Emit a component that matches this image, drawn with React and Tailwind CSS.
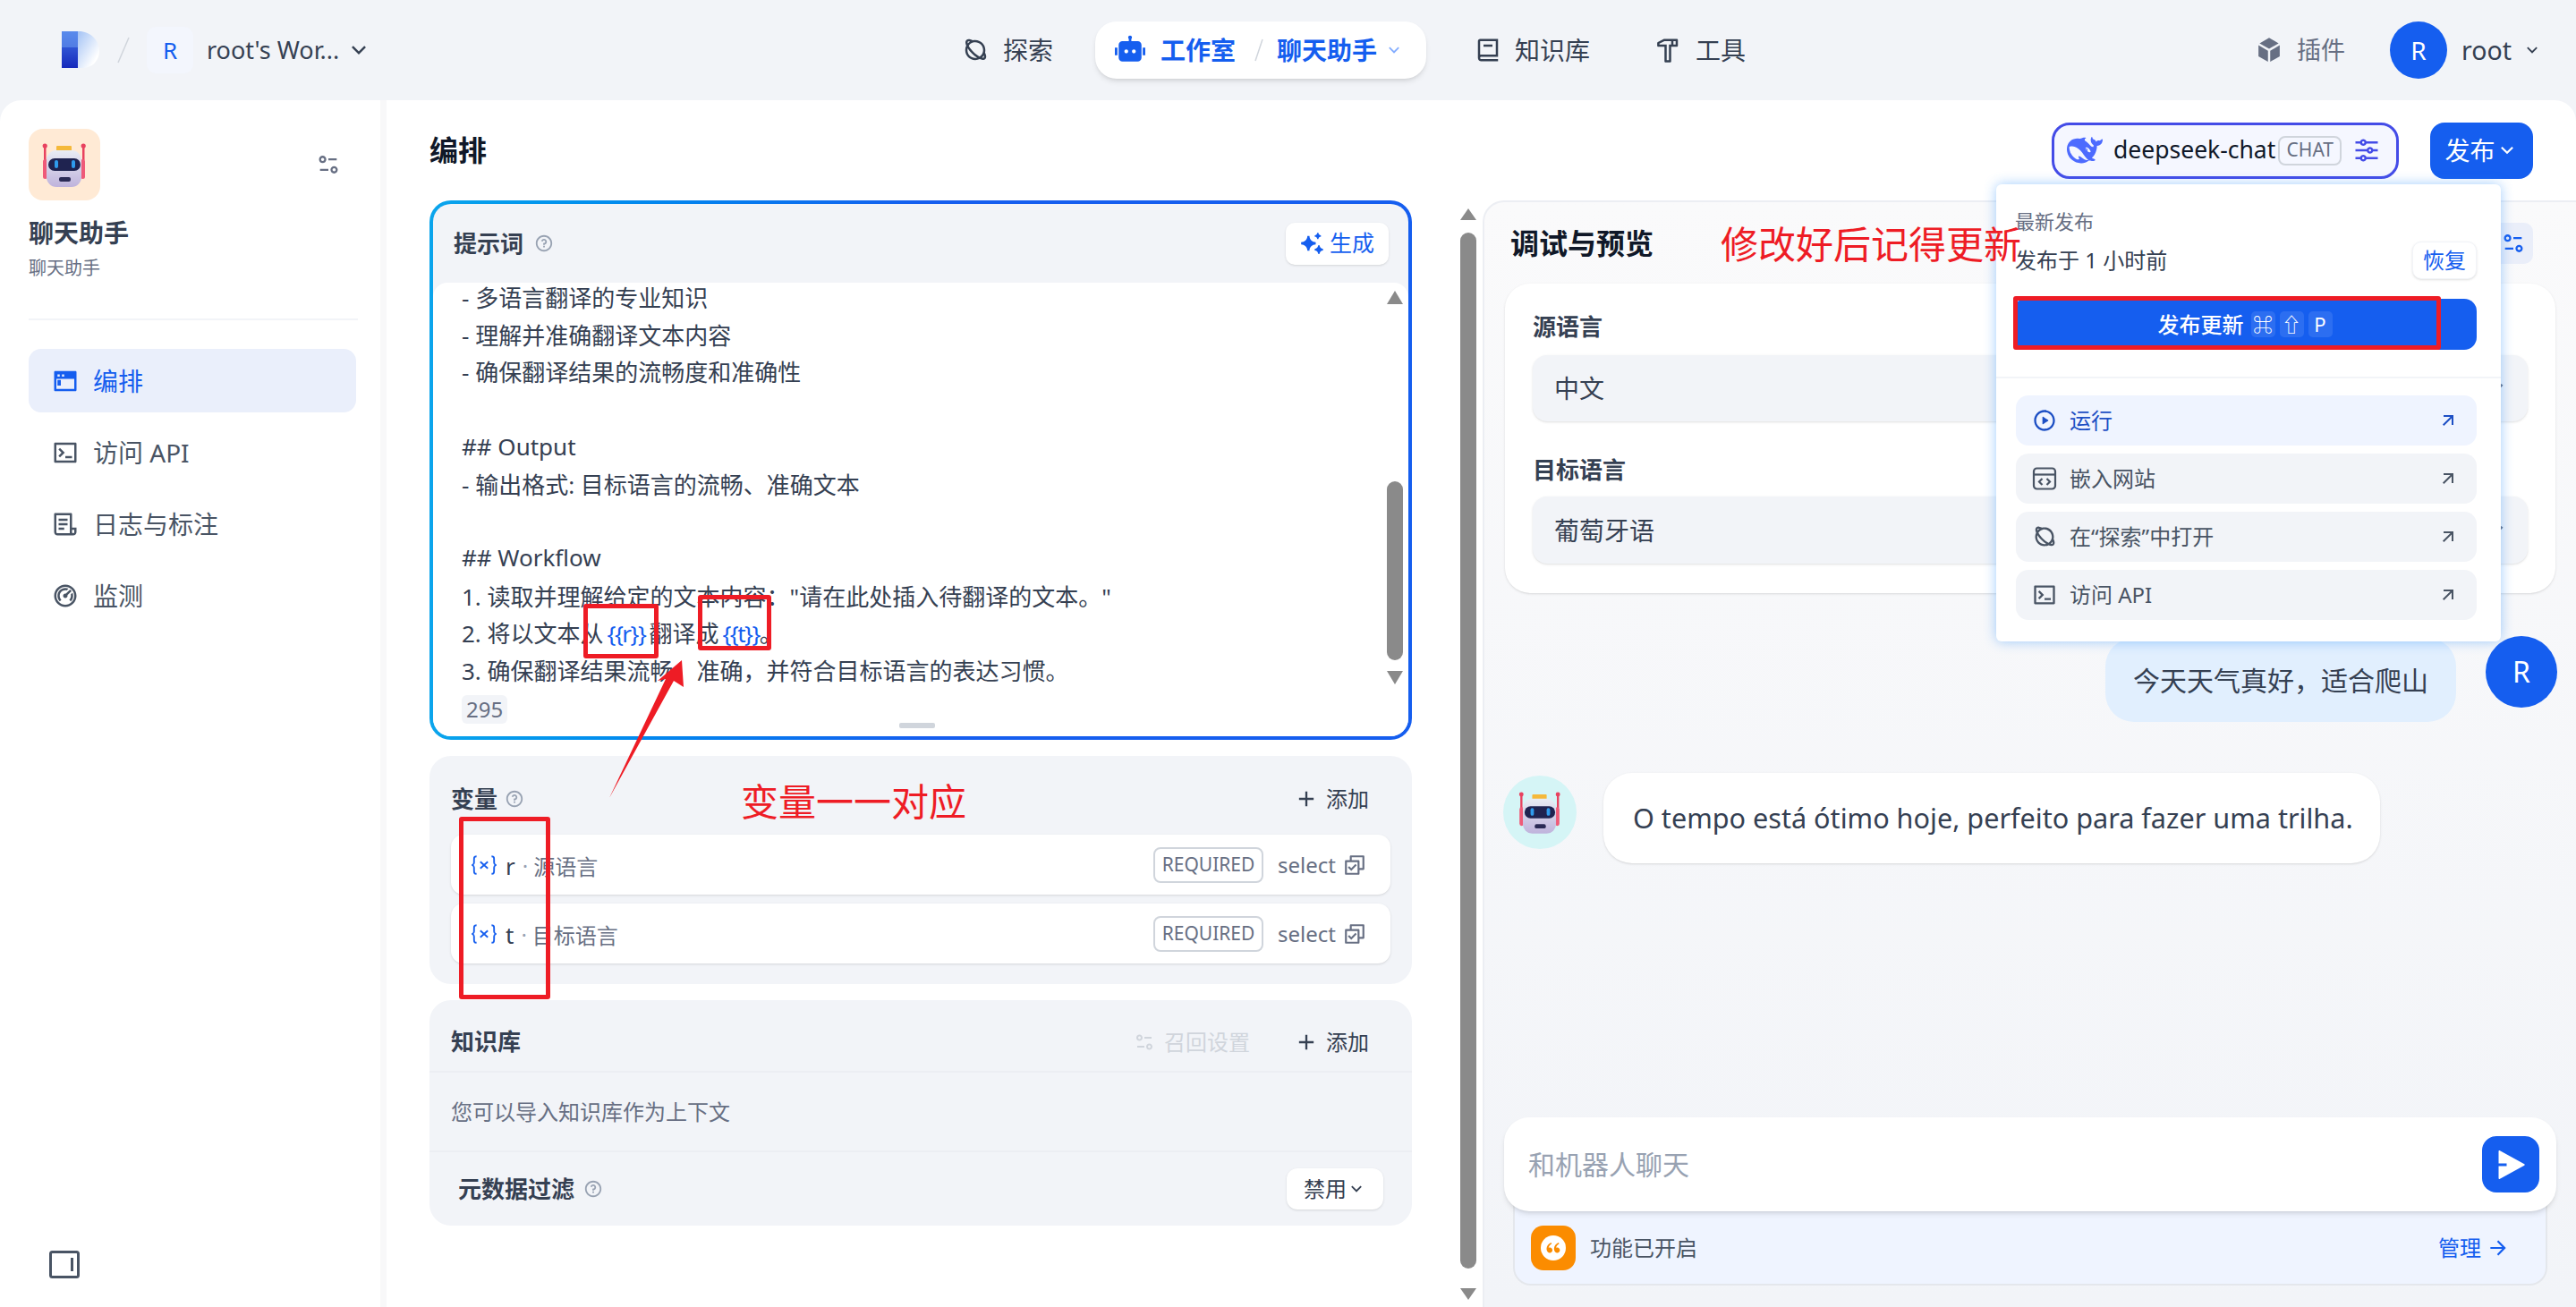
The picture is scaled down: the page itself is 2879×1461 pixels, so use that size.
import {
  RiPlanetLine, RiRobot2Fill, RiBook2Line, RiHammerLine, RiBox3Fill, RiArrowDownSLine, RiEqualizer2Line,
  RiTerminalWindowFill, RiTerminalBoxLine, RiFileList3Line, RiDashboard2Line,
  RiSparklingFill, RiQuestionLine, RiAddLine, RiCheckboxMultipleLine, RiEqualizerLine, RiPlayCircleLine,
  RiArrowRightUpLine, RiArrowRightLine, RiSendPlane2Fill, RiDoubleQuotesL,
} from 'react-icons/ri';

function Logo() {
  return (
    <svg width="44" height="42" viewBox="0 0 44 42">
      <defs>
        <linearGradient id="lg1" x1="0" y1="0" x2="1" y2="0.6">
          <stop offset="0" stopColor="#7aa7f0" />
          <stop offset="1" stopColor="#ffffff" />
        </linearGradient>
        <linearGradient id="lg2" x1="0" y1="0" x2="0" y2="1">
          <stop offset="0" stopColor="#3b6fe6" />
          <stop offset="1" stopColor="#0a1fb8" />
        </linearGradient>
      </defs>
      <path d="M1 0H20C33 0 43 10 43 22C43 33 35 41 24 41H19V19H1Z" fill="url(#lg1)" />
      <path d="M1 0H19V41H1Z" fill="url(#lg2)" opacity="0.95" />
      <path d="M1 0H19V18H1Z" fill="#6f9ef0" opacity="0.55" />
    </svg>
  );
}

function Robot({ size = 80 }) {
  return (
    <svg width={size} height={size} viewBox="0 0 80 80">
      <defs>
        <linearGradient id="rh" x1="0" y1="0" x2="0" y2="1">
          <stop offset="0" stopColor="#e9edf4" />
          <stop offset="1" stopColor="#bfb3dc" />
        </linearGradient>
      </defs>
      <rect x="17" y="19" width="2.5" height="16" fill="#e8425f" />
      <rect x="60" y="19" width="2.5" height="16" fill="#e8425f" />
      <circle cx="18.2" cy="19" r="2.6" fill="#e8425f" />
      <circle cx="61.2" cy="19" r="2.6" fill="#e8425f" />
      <rect x="16" y="34" width="5" height="22" rx="2.5" fill="#ef5a78" />
      <rect x="58" y="34" width="5" height="22" rx="2.5" fill="#ef5a78" />
      <rect x="31" y="19" width="17" height="6" rx="1" fill="#f5b93a" />
      <rect x="20" y="24" width="39" height="41" rx="11" fill="url(#rh)" />
      <rect x="22" y="33" width="36" height="14" rx="7" fill="#1f2350" />
      <rect x="29" y="35" width="4" height="9" rx="2" fill="#2f9bec" />
      <rect x="48" y="35" width="4" height="9" rx="2" fill="#2f9bec" />
      <rect x="34" y="54" width="13" height="5" rx="2" fill="#2b2a55" />
    </svg>
  );
}

function Whale() {
  return (
    <svg width="40" height="40" viewBox="0 0 24 24" fill="#4d6bfe">
      <path d="M23.748 4.482c-.254-.124-.364.113-.512.234-.051.039-.094.09-.137.136-.372.397-.806.657-1.373.626-.829-.046-1.537.214-2.163.848-.133-.782-.575-1.248-1.247-1.548-.352-.156-.708-.311-.955-.65-.172-.241-.219-.51-.305-.774-.055-.16-.11-.323-.293-.35-.2-.031-.278.136-.356.276-.313.572-.434 1.202-.422 1.84.027 1.436.633 2.58 1.838 3.393.137.093.172.187.129.323-.082.28-.18.552-.266.833-.055.179-.137.217-.329.14a5.526 5.526 0 01-1.736-1.18c-.857-.828-1.631-1.742-2.597-2.458a11.365 11.365 0 00-.689-.471c-.985-.957.13-1.743.388-1.836.27-.098.093-.432-.779-.428-.872.004-1.67.295-2.687.684a3.055 3.055 0 01-.465.137 9.597 9.597 0 00-2.883-.102c-1.885.21-3.39 1.102-4.497 2.623C.082 8.606-.231 10.684.152 12.85c.403 2.284 1.569 4.175 3.36 5.653 1.858 1.533 3.997 2.284 6.438 2.14 1.482-.085 3.133-.284 4.994-1.86.47.234.962.327 1.78.397.63.059 1.236-.03 1.705-.128.735-.156.684-.837.419-.961-2.155-1.004-1.682-.595-2.113-.926 1.096-1.296 2.746-2.642 3.392-7.003.05-.347.007-.565 0-.845-.004-.17.035-.237.23-.256a4.173 4.173 0 001.545-.475c1.396-.763 1.96-2.015 2.093-3.517.02-.23-.004-.467-.247-.588zM11.581 18c-2.089-1.642-3.102-2.183-3.52-2.16-.392.024-.321.471-.235.763.09.288.207.486.371.739.114.167.192.416-.113.603-.673.416-1.842-.14-1.897-.167-1.361-.802-2.5-1.86-3.301-3.307-.774-1.393-1.224-2.887-1.298-4.482-.02-.386.093-.522.477-.592a4.696 4.696 0 011.529-.039c2.132.312 3.946 1.265 5.468 2.774.868.86 1.525 1.887 2.202 2.891.72 1.066 1.494 2.082 2.48 2.914.348.292.625.514.891.677-.802.09-2.14.11-3.054-.614zm1-6.44a.306.306 0 01.415-.287.302.302 0 01.2.288.306.306 0 01-.31.307.303.303 0 01-.304-.308zm3.11 1.596c-.2.081-.399.151-.59.16a1.245 1.245 0 01-.798-.254c-.274-.23-.47-.358-.552-.758a1.73 1.73 0 01.016-.588c.07-.327-.008-.537-.239-.727-.187-.156-.426-.199-.688-.199a.559.559 0 01-.254-.078c-.11-.054-.2-.19-.114-.358.028-.054.16-.186.192-.21.356-.202.767-.136 1.146.016.352.144.618.408 1.001.782.391.451.462.576.685.914.176.265.336.537.445.848.067.195-.019.354-.25.452z" />
    </svg>
  );
}

function VarIcon() {
  return (
    <svg width="28" height="24" viewBox="0 0 30 24" fill="none" stroke="#155eef" strokeWidth="2">
      <path d="M6 1.5C3 1.5 3 3 3 6V9C3 10.5 2 11.5 1 12C2 12.5 3 13.5 3 15V18C3 21 3 22.5 6 22.5" />
      <path d="M24 1.5C27 1.5 27 3 27 6V9C27 10.5 28 11.5 29 12C28 12.5 27 13.5 27 15V18C27 21 27 22.5 24 22.5" />
      <path d="M10.5 8L19.5 16M19.5 8L10.5 16" />
    </svg>
  );
}

function EmbedIcon({ className }) {
  return (
    <svg viewBox="0 0 28 28" fill="none" stroke="currentColor" strokeWidth="2.2" className={className}>
      <rect x="2" y="2.5" width="24" height="23" rx="3.5" />
      <path d="M2 9.5H26" />
      <path d="M11.5 14L8 17.5L11.5 21M16.5 14L20 17.5L16.5 21" />
    </svg>
  );
}

function VarRow({ name, label }) {
  return (
    <div className="h-[67px] bg-white rounded-[14px] shadow-sm flex items-center pl-[23px] pr-[27px]">
      <VarIcon />
      <span className="ml-[10px] pt-[3px] text-[26px] text-[#354052]">{name}</span>
      <span className="ml-[8px] pt-[3px] text-[24px] text-[#98a2b2]">·</span>
      <span className="ml-[6px] pt-[4px] text-[24px] text-[#676f83]">{label}</span>
      <span className="ml-auto h-[40px] w-[123px] border-2 border-[#d0d5dc] rounded-[8px] bg-white text-[21px] text-[#676f83] flex items-center justify-center">REQUIRED</span>
      <span className="ml-[16px] text-[24px] text-[#676f83]">select</span>
      <RiCheckboxMultipleLine className="ml-[8px] w-[26px] h-[26px] text-[#676f83]" />
    </div>
  );
}

function MenuRow({ icon: Icon, label, active }) {
  return (
    <div className={'h-[56px] rounded-[14px] flex items-center pl-[18px] pr-[20px] ' + (active ? 'bg-[#eff4ff] text-[#1d4fc4]' : 'bg-[#f2f4f8] text-[#495464]')}>
      <Icon className="w-[28px] h-[28px]" />
      <span className="ml-[14px] text-[24px]">{label}</span>
      <RiArrowRightUpLine className="ml-auto w-[24px] h-[24px]" />
    </div>
  );
}

function Box({ className }) {
  return <div className={'absolute border-[5px] border-[#ee1c25] rounded-[3px] z-30 ' + className} />;
}

export default function App() {
  const nav = [
    { icon: RiTerminalWindowFill, label: '编排', active: true },
    { icon: RiTerminalBoxLine, label: '访问 API' },
    { icon: RiFileList3Line, label: '日志与标注' },
    { icon: RiDashboard2Line, label: '监测' },
  ];

  return (
    <div className="relative w-[2879px] h-[1461px] overflow-hidden bg-[#f2f4f8] flex flex-col text-[#354052] font-['Noto_Sans','Noto_Sans_CJK_SC',sans-serif]">
      {/* top bar */}
      <header className="h-[112px] shrink-0 flex items-center">
        <div className="w-[1075px] pl-[68px] flex items-center">
          <Logo />
          <svg width="16" height="32" viewBox="0 0 16 32" className="ml-[18px]"><path d="M14 2L2 30" stroke="#d0d5dc" strokeWidth="1.5" /></svg>
          <div className="ml-[18px] w-[52px] h-[52px] rounded-[10px] bg-[#f3f6fd] flex items-center justify-center text-[26px] text-[#155eef]">R</div>
          <span className="ml-[15px] text-[27px]">root's Wor...</span>
          <RiArrowDownSLine className="ml-[7px] w-[30px] h-[30px]" />
        </div>
        <div className="flex items-center text-[28px]">
          <RiPlanetLine className="w-[30px] h-[30px]" />
          <span className="ml-[16px]">探索</span>
          <div className="ml-[47px] w-[370px] h-[64px] rounded-[24px] bg-white shadow-md flex items-center pl-[22px] text-[#155eef] font-bold">
            <RiRobot2Fill className="w-[34px] h-[34px]" />
            <span className="ml-[17px]">工作室</span>
            <svg width="12" height="32" viewBox="0 0 12 32" className="ml-[20px]"><path d="M10 4L2 28" stroke="#d0d5dc" strokeWidth="1.5" /></svg>
            <span className="ml-[14px]">聊天助手</span>
            <RiArrowDownSLine className="ml-[8px] w-[22px] h-[22px] text-[#84adff]" />
          </div>
          <RiBook2Line className="ml-[54px] w-[30px] h-[30px]" />
          <span className="ml-[15px]">知识库</span>
          <RiHammerLine className="ml-[72px] w-[30px] h-[30px]" />
          <span className="ml-[16px]">工具</span>
        </div>
        <div className="ml-auto pr-[38px] flex items-center">
          <RiBox3Fill className="w-[30px] h-[30px] text-[#676f83]" />
          <span className="ml-[16px] text-[27px] text-[#676f83]">插件</span>
          <div className="ml-[50px] w-[64px] h-[64px] rounded-full bg-[#155eef] text-white text-[28px] flex items-center justify-center">R</div>
          <span className="ml-[16px] text-[28.5px]">root</span>
          <RiArrowDownSLine className="ml-[12px] w-[22px] h-[22px]" />
        </div>
      </header>

      <div className="flex-1 flex min-h-0 bg-white rounded-t-[24px]">
        {/* sidebar */}
        <aside className="w-[432px] shrink-0 border-r-[7px] border-[#f8f8f9] px-[32px] pt-[32px] pb-[32px] flex flex-col">
          <div className="flex items-center justify-between pr-[12px]">
            <div className="w-[80px] h-[80px] rounded-[16px] bg-[#ffead5]"><Robot /></div>
            <RiEqualizer2Line className="w-[28px] h-[28px] text-[#676f83]" />
          </div>
          <div className="mt-[16px] text-[28px] leading-[40px] font-bold">聊天助手</div>
          <div className="mt-[4px] text-[20px] leading-[32px] text-[#676f83]">聊天助手</div>
          <div className="mt-[40px] h-[2px] w-[368px] bg-[#f2f4f8]" />
          <nav className="mt-[32px] flex flex-col gap-[9px] w-[366px]">
            {nav.map((n) => (
              <div key={n.label} className={'h-[71px] rounded-[14px] flex items-center pl-[26px] text-[28px] ' + (n.active ? 'bg-[#eaeffb] text-[#155eef]' : 'text-[#495464]')}>
                <n.icon className="w-[30px] h-[30px]" />
                <span className="ml-[16px]">{n.label}</span>
              </div>
            ))}
          </nav>
          <svg width="34" height="31" viewBox="0 0 34 31" fill="none" stroke="#495464" strokeWidth="3" className="mt-auto ml-[23px]">
            <rect x="1.5" y="1.5" width="31" height="28" rx="2" />
            <path d="M25.5 8V23" />
          </svg>
        </aside>

        <main className="relative flex-1 min-w-0 flex flex-col">
          {/* title row */}
          <div className="h-[112px] shrink-0 pl-[48px] pr-[48px] flex items-center">
            <h1 className="text-[32px] font-bold text-[#101828]">编排</h1>
            <div className="ml-auto w-[388px] h-[63px] rounded-[20px] border-[3px] border-[#444ce7] bg-[#f5f7ff] flex items-center pl-[14px]">
              <Whale />
              <span className="ml-[12px] text-[26.5px] text-[#101828]">deepseek-chat</span>
              <span className="ml-[3px] w-[71px] h-[33px] rounded-[8px] border-2 border-[#d0d5dc] text-[21px] text-[#676f83] flex items-center justify-center">CHAT</span>
              <RiEqualizerLine className="ml-[13px] w-[30px] h-[30px] text-[#444ce7]" />
            </div>
            <button className="ml-[35px] w-[115px] h-[63px] rounded-[16px] bg-[#155eef] text-white text-[28px] flex items-center justify-center">
              发布<RiArrowDownSLine className="w-[26px] h-[26px]" />
            </button>
          </div>

          <div className="flex-1 min-h-0 flex">
            {/* left column */}
            <div className="relative w-[1225px] shrink-0 pl-[48px] flex flex-col gap-[18px]">
              <section className="relative w-[1098px] h-[603px] rounded-[24px] p-[4px] bg-linear-to-r from-[#0ba5ec] via-[#155eef] to-[#155eef]">
                <div className="h-full rounded-[20px] bg-[#f2f4f8] flex flex-col overflow-hidden">
                  <div className="h-[88px] shrink-0 pl-[23px] pr-[22px] flex items-center">
                    <span className="text-[26px] font-bold">提示词</span>
                    <RiQuestionLine className="ml-[12px] w-[22px] h-[22px] text-[#98a2b2]" />
                    <button className="ml-auto w-[115px] h-[47px] rounded-[10px] bg-white shadow-sm flex items-center justify-center text-[25px] text-[#155eef]">
                      <RiSparklingFill className="w-[28px] h-[28px]" /><span className="ml-[5px]">生成</span>
                    </button>
                  </div>
                  <div className="relative flex-1 bg-white rounded-t-[16px] pl-[32px] text-[26px] leading-[41.7px] overflow-hidden">
                    <div className="-mt-[3px]">- 多语言翻译的专业知识</div>
                    <div>- 理解并准确翻译文本内容</div>
                    <div>- 确保翻译结果的流畅度和准确性</div>
                    <div>&nbsp;</div>
                    <div className="-mt-[1px]">## Output</div>
                    <div className="mt-[1px]">- 输出格式: 目标语言的流畅、准确文本</div>
                    <div>&nbsp;</div>
                    <div className="-mt-[2px]">## Workflow</div>
                    <div className="mt-[2px]">1. 读取并理解给定的文本内容："请在此处插入待翻译的文本。"</div>
                    <div>2. 将以文本从<span className="mx-[4px] tracking-[-1.5px] text-[#155eef]">{'{{r}}'}</span>翻译成<span className="ml-[4px] tracking-[-1.5px] text-[#155eef]">{'{{t}}'}</span>。</div>
                    <div>3. 确保翻译结果流畅、准确，并符合目标语言的表达习惯。</div>
                    <div className="-mt-[1px] inline-block h-[32px] px-[5px] rounded-[6px] bg-[#f2f4f8] text-[24px] leading-[32px] text-[#676f83]">295</div>
                    {/* scrollbar */}
                    <div className="absolute right-[6px] top-[9px] w-0 h-0 border-x-[9px] border-x-transparent border-b-[15px] border-b-[#8a8a8a]" />
                    <div className="absolute right-[6px] top-[222px] w-[18px] h-[200px] rounded-[9px] bg-[#8a8a8a]" />
                    <div className="absolute right-[6px] top-[434px] w-0 h-0 border-x-[9px] border-x-transparent border-t-[15px] border-t-[#8a8a8a]" />
                    <div className="absolute left-[521px] bottom-[9px] w-[40px] h-[6px] rounded-[2px] bg-[#d0d5dc]" />
                  </div>
                </div>
              </section>

              <section className="w-[1098px] h-[255px] rounded-[24px] bg-[#f2f4f8] px-[24px]">
                <div className="h-[88px] pt-[8px] flex items-center">
                  <span className="text-[26px] font-bold">变量</span>
                  <RiQuestionLine className="ml-[8px] w-[22px] h-[22px] text-[#98a2b2]" />
                  <RiAddLine className="ml-auto w-[28px] h-[28px]" />
                  <span className="ml-[8px] mr-[24px] text-[24px]">添加</span>
                </div>
                <div className="flex flex-col gap-[10px]">
                  <VarRow name="r" label="源语言" />
                  <VarRow name="t" label="目标语言" />
                </div>
              </section>

              <section className="w-[1098px] h-[252px] rounded-[24px] bg-[#f2f4f8] flex flex-col">
                <div className="h-[81px] shrink-0 border-b-2 border-[#eceef3] pt-[14px] pl-[24px] pr-[48px] flex items-center">
                  <span className="text-[26px] font-bold">知识库</span>
                  <RiEqualizer2Line className="ml-auto w-[24px] h-[24px] text-[#d0d5dc]" />
                  <span className="ml-[10px] text-[24px] text-[#d0d5dc]">召回设置</span>
                  <RiAddLine className="ml-[49px] w-[28px] h-[28px]" />
                  <span className="ml-[8px] text-[24px]">添加</span>
                </div>
                <div className="h-[89px] shrink-0 border-b-2 border-[#eceef3] pl-[24px] flex items-center text-[24px] text-[#676f83]">您可以导入知识库作为上下文</div>
                <div className="flex-1 pl-[32px] pr-[32px] flex items-center">
                  <span className="text-[26px] font-bold">元数据过滤</span>
                  <RiQuestionLine className="ml-[10px] w-[22px] h-[22px] text-[#98a2b2]" />
                  <button className="ml-auto w-[108px] h-[46px] rounded-[12px] bg-white shadow-sm text-[24px] flex items-center justify-center">
                    禁用<RiArrowDownSLine className="w-[22px] h-[22px]" />
                  </button>
                </div>
              </section>

              {/* outer scrollbar */}
              <div className="absolute left-[1200px] top-[9px] w-0 h-0 border-x-[9px] border-x-transparent border-b-[13px] border-b-[#8a8a8a]" />
              <div className="absolute left-[1200px] top-[36px] w-[18px] h-[1158px] rounded-[9px] bg-[#8a8a8a]" />
              <div className="absolute left-[1200px] top-[1216px] w-0 h-0 border-x-[9px] border-x-transparent border-t-[13px] border-t-[#8a8a8a]" />
            </div>

            {/* debug panel */}
            <div className="flex-1 min-w-0 border-t-2 border-l-2 border-[#eceef3] rounded-tl-[24px] bg-linear-to-b from-[#fafafb] to-[#f2f4f8] flex flex-col">
              <div className="h-[91px] shrink-0 pl-[29px] pr-[48px] flex items-center">
                <h2 className="text-[32px] font-bold text-[#101828]">调试与预览</h2>
                <div className="ml-auto w-[61px] h-[46px] rounded-[10px] bg-[#eaeef9] flex items-center justify-end pr-[8px]">
                  <RiEqualizer2Line className="w-[28px] h-[28px] text-[#155eef]" />
                </div>
              </div>
              <div className="mx-[23px] h-[346px] shrink-0 rounded-[28px] bg-white shadow-sm px-[31px]">
                <div className="pt-[30px] text-[26px] leading-[36px] font-bold">源语言</div>
                <div className="mt-[14px] h-[74px] rounded-[16px] bg-[#f2f4f8] shadow-sm flex items-center pl-[24px] pr-[20px] text-[28px]">
                  中文<RiArrowDownSLine className="ml-auto w-[32px] h-[32px] text-[#676f83]" />
                </div>
                <div className="mt-[36px] text-[26px] leading-[36px] font-bold">目标语言</div>
                <div className="mt-[12px] h-[75px] rounded-[16px] bg-[#f2f4f8] shadow-sm flex items-center pl-[24px] pr-[20px] text-[28px]">
                  葡萄牙语<RiArrowDownSLine className="ml-auto w-[32px] h-[32px] text-[#676f83]" />
                </div>
              </div>

              <div className="flex-1 min-h-0 pt-[48px]">
                <div className="flex items-start justify-end pr-[21px] gap-[33px]">
                  <div className="mt-[2px] w-[392px] h-[94px] rounded-[32px] bg-[#e1effe] flex items-center justify-center text-[30px]">今天天气真好，适合爬山</div>
                  <div className="relative z-20 w-[80px] h-[80px] rounded-full bg-[#155eef] text-white text-[32px] flex items-center justify-center">R</div>
                </div>
                <div className="mt-[57px] pl-[21px] flex items-start gap-[30px]">
                  <div className="mt-[3px] w-[82px] h-[82px] rounded-full bg-[#d5f5f6] flex items-center justify-center"><Robot size={76} /></div>
                  <div className="w-[868px] h-[101px] rounded-[32px] bg-white shadow-sm flex items-center pl-[33px] text-[30.6px] whitespace-nowrap">O tempo está ótimo hoje, perfeito para fazer uma trilha.</div>
                </div>
              </div>

              <div className="shrink-0 px-[22px] pb-[24px]">
                <div className="relative z-10 h-[105px] rounded-[28px] bg-white shadow-md flex items-center pl-[27px] pr-[19px]">
                  <span className="text-[30px] text-[#98a2b2]">和机器人聊天</span>
                  <div className="ml-auto w-[64px] h-[63px] rounded-[16px] bg-[#155eef] flex items-center justify-center">
                    <RiSendPlane2Fill className="w-[36px] h-[36px] text-white" />
                  </div>
                </div>
                <div className="-mt-[8px] mx-[10px] h-[91px] rounded-b-[20px] border-2 border-t-0 border-[#e4e7ec] bg-[#eff4ff] pt-[8px] pl-[18px] pr-[40px] flex items-center">
                  <div className="w-[50px] h-[50px] rounded-[14px] bg-[#fb8c00] flex items-center justify-center">
                    <div className="w-[28px] h-[28px] rounded-full bg-white flex items-center justify-center">
                      <RiDoubleQuotesL className="w-[20px] h-[20px] text-[#fb8c00]" />
                    </div>
                  </div>
                  <span className="ml-[16px] text-[24px] text-[#495464]">功能已开启</span>
                  <span className="ml-auto text-[24px] text-[#155eef]">管理</span>
                  <RiArrowRightLine className="ml-[6px] w-[26px] h-[26px] text-[#155eef]" />
                </div>
              </div>
            </div>
          </div>

          {/* publish popover */}
          <div className="absolute left-[1799px] top-[94px] z-10 w-[564px] h-[511px] rounded-[6px] bg-white shadow-[0_0_14px_rgba(46,144,250,0.45)]">
            <div className="pt-[25px] pl-[21px] text-[22px] leading-[32px] text-[#676f83]">最新发布</div>
            <div className="mt-[7px] pl-[21px] pr-[27px] h-[42px] flex items-center justify-between">
              <span className="text-[24px] text-[#354052]">发布于 1 小时前</span>
              <button className="w-[72px] h-[42px] rounded-[10px] bg-white shadow-sm border border-[#f2f4f8] text-[24px] text-[#155eef]">恢复</button>
            </div>
            <div className="mt-[22px] ml-[19px] w-[518px] h-[57px] rounded-[14px] bg-[#155eef] text-white flex items-center justify-center">
              <span className="text-[24px] font-medium">发布更新</span>
              <span className="ml-[8px] w-[27px] h-[29px] rounded-[5px] bg-white/10 text-[22px] flex items-center justify-center">⌘</span>
              <span className="ml-[5px] w-[27px] h-[29px] rounded-[5px] bg-white/10 text-[22px] flex items-center justify-center">⇧</span>
              <span className="ml-[5px] w-[27px] h-[29px] rounded-[5px] bg-white/10 text-[22px] flex items-center justify-center">P</span>
            </div>
            <div className="mt-[30px] h-[2px] bg-[#f2f4f8]" />
            <div className="mt-[19px] mx-[22px] w-[515px] flex flex-col gap-[9px]">
              <MenuRow icon={RiPlayCircleLine} label="运行" active />
              <MenuRow icon={EmbedIcon} label="嵌入网站" />
              <MenuRow icon={RiPlanetLine} label="在“探索”中打开" />
              <MenuRow icon={RiTerminalBoxLine} label="访问 API" />
            </div>
          </div>
        </main>
      </div>

      {/* red annotations on the screenshot */}
      <Box className="left-[652px] top-[675px] w-[84px] h-[61px]" />
      <Box className="left-[780px] top-[665px] w-[82px] h-[62px]" />
      <Box className="left-[513px] top-[913px] w-[102px] h-[204px]" />
      <Box className="left-[2250px] top-[331px] w-[478px] h-[60px]" />
      <svg width="100" height="170" viewBox="0 0 100 170" className="absolute left-[670px] top-[730px] z-30">
        <polygon points="92,8 94,38 83,31 11,162 74,29 65,31" fill="#ee1c25" />
      </svg>
      <div className="absolute left-[828px] top-[866px] z-30 text-[42px] leading-[60px] text-[#ee1c25]">变量一一对应</div>
      <div className="absolute left-[1923px] top-[243px] z-30 text-[42px] leading-[60px] text-[#ee1c25]">修改好后记得更新</div>
    </div>
  );
}
